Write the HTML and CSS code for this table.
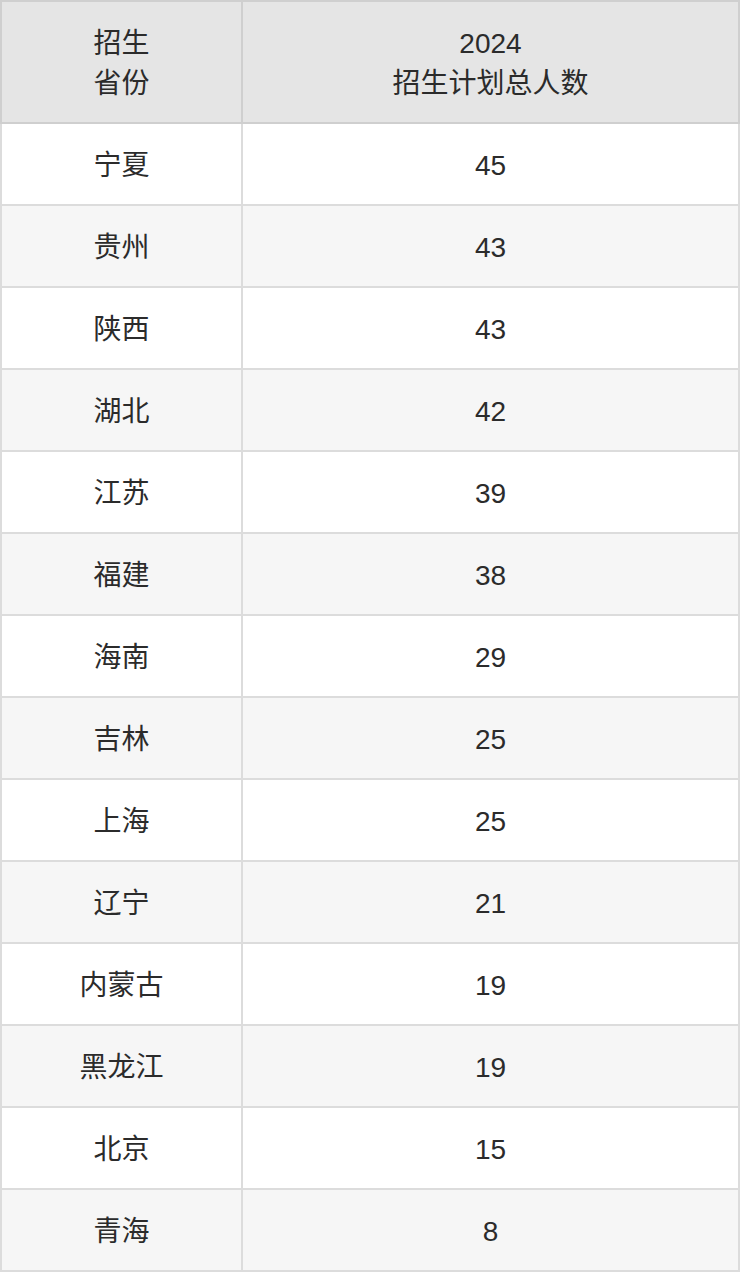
FILE: index.html
```html
<!DOCTYPE html>
<html lang="zh">
<head>
<meta charset="utf-8">
<link rel="stylesheet" href="styles.css">
</head>
<body>
<table class="plan">
  <colgroup><col class="c1"><col class="c2"></colgroup>
  <thead>
    <tr><th>招生<br>省份</th><th>2024<br>招生计划总人数</th></tr>
  </thead>
  <tbody>
    <tr><td>宁夏</td><td>45</td></tr>
    <tr><td>贵州</td><td>43</td></tr>
    <tr><td>陕西</td><td>43</td></tr>
    <tr><td>湖北</td><td>42</td></tr>
    <tr><td>江苏</td><td>39</td></tr>
    <tr><td>福建</td><td>38</td></tr>
    <tr><td>海南</td><td>29</td></tr>
    <tr><td>吉林</td><td>25</td></tr>
    <tr><td>上海</td><td>25</td></tr>
    <tr><td>辽宁</td><td>21</td></tr>
    <tr><td>内蒙古</td><td>19</td></tr>
    <tr><td>黑龙江</td><td>19</td></tr>
    <tr><td>北京</td><td>15</td></tr>
    <tr><td>青海</td><td>8</td></tr>
  </tbody>
</table>
</body>
</html>
```
FILE: styles.css
```css
html, body {
  margin: 0;
  padding: 0;
  background: #ffffff;
}
.plan {
  width: 740px;
  border-collapse: collapse;
  table-layout: fixed;
  font-family: "Liberation Sans", Arial, "Noto Sans CJK SC", sans-serif;
  font-size: 28px;
  line-height: 40px;
  color: #2b2b2b;
}
.c1 { width: 241px; }
.plan th,
.plan td {
  text-align: center;
  vertical-align: middle;
  padding: 3px 0 0;
  font-weight: normal;
}
.plan th {
  height: 117px;
  background: #e5e5e5;
  border: 2px solid #cfcfcf;
}
.plan td {
  height: 77px;
  border: 2px solid #dcdcdc;
}
.plan tbody tr:nth-child(even) td {
  background: #f6f6f6;
}
```
